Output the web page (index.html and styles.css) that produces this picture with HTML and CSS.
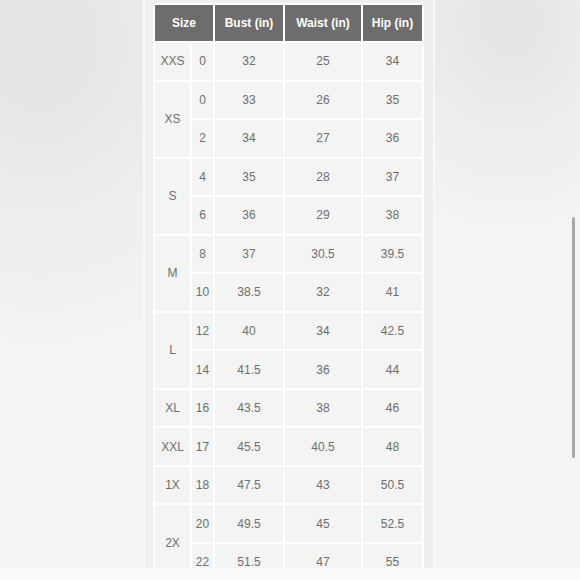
FILE: index.html
```html
<!DOCTYPE html>
<html lang="en">
<head>
<meta charset="utf-8">
<title>Size chart</title>
<link rel="stylesheet" href="styles.css">
</head>
<body>
<div class="page">
  <div class="panel">
    <table class="chart">
      <colgroup>
        <col class="c-size">
        <col class="c-num">
        <col class="c-bust">
        <col class="c-waist">
        <col class="c-hip">
      </colgroup>
      <thead>
        <tr>
          <th colspan="2">Size</th>
          <th>Bust (in)</th>
          <th>Waist (in)</th>
          <th>Hip (in)</th>
        </tr>
      </thead>
      <tbody>
        <tr><td>XXS</td><td>0</td><td>32</td><td>25</td><td>34</td></tr>
        <tr><td rowspan="2">XS</td><td>0</td><td>33</td><td>26</td><td>35</td></tr>
        <tr><td>2</td><td>34</td><td>27</td><td>36</td></tr>
        <tr><td rowspan="2">S</td><td>4</td><td>35</td><td>28</td><td>37</td></tr>
        <tr><td>6</td><td>36</td><td>29</td><td>38</td></tr>
        <tr><td rowspan="2">M</td><td>8</td><td>37</td><td>30.5</td><td>39.5</td></tr>
        <tr><td>10</td><td>38.5</td><td>32</td><td>41</td></tr>
        <tr><td rowspan="2">L</td><td>12</td><td>40</td><td>34</td><td>42.5</td></tr>
        <tr><td>14</td><td>41.5</td><td>36</td><td>44</td></tr>
        <tr><td>XL</td><td>16</td><td>43.5</td><td>38</td><td>46</td></tr>
        <tr><td>XXL</td><td>17</td><td>45.5</td><td>40.5</td><td>48</td></tr>
        <tr><td>1X</td><td>18</td><td>47.5</td><td>43</td><td>50.5</td></tr>
        <tr><td rowspan="2">2X</td><td>20</td><td>49.5</td><td>45</td><td>52.5</td></tr>
        <tr><td>22</td><td>51.5</td><td>47</td><td>55</td></tr>
      </tbody>
    </table>
  </div>
  <div class="scrollbar"></div>
</div>
</body>
</html>
```

FILE: styles.css
```css
* { box-sizing: border-box; }

html, body {
  margin: 0;
  padding: 0;
  width: 580px;
  height: 580px;
  overflow: hidden;
}

body {
  background: #fafafa;
  font-family: "Liberation Sans", Arial, sans-serif;
}

.page {
  position: relative;
  width: 580px;
  height: 568px;
  display: flex;
  background:
    radial-gradient(ellipse 260px 320px at 40px 40px, #e3e3e3 0%, rgba(227,227,227,0) 100%),
    radial-gradient(ellipse 180px 220px at 510px 20px, #e4e4e4 0%, rgba(228,228,228,0) 100%),
    #f4f4f4;
}

.panel {
  margin-left: 143px;
  width: 292px;
  height: 568px;
  overflow: hidden;
  background: #eeeeee;
  border-left: 2px solid #f8f8f8;
  border-right: 2px solid #f8f8f8;
  padding: 3px 0 0 8px;
}

.chart {
  border-collapse: separate;
  border-spacing: 2px;
  background: #ffffff;
  width: 271px;
  table-layout: fixed;
}

.c-size { width: 35px; }
.c-num { width: 21px; }
.c-bust { width: 68px; }
.c-waist { width: 76px; }
.c-hip { width: 59px; }

.chart th {
  height: 36px;
  background: #6d6d6d;
  color: #ffffff;
  font-weight: bold;
  font-size: 12px;
  text-align: center;
  vertical-align: middle;
  padding: 0;
}

.chart td {
  height: 36.54px;
  background: #f4f4f4;
  color: #6e6e6e;
  font-size: 12px;
  text-align: center;
  vertical-align: middle;
  padding: 0;
}

.chart tbody td[rowspan] { height: auto; }

.scrollbar {
  position: absolute;
  left: 572px;
  top: 217px;
  width: 3px;
  height: 241px;
  border-radius: 2px;
  background: #a9a9a9;
}
```
